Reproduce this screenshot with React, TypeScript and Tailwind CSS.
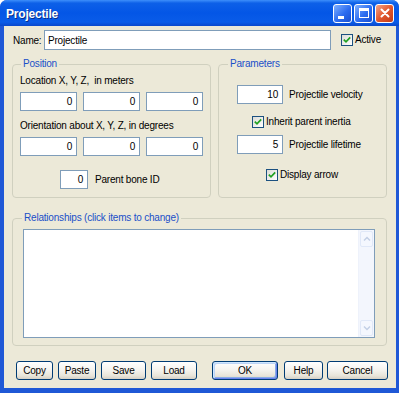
import React from "react";

function Check() {
  return (
    <svg width="8" height="8" viewBox="0 0 8 8">
      <path d="M0.8 3.6 L3 5.8 L7.2 1.4" stroke="#21a121" strokeWidth="1.7" fill="none" />
    </svg>
  );
}

function CheckBox({ label, className }: { label: string; className?: string }) {
  return (
    <div className={"flex items-center " + (className ?? "")}>
      <div className="w-[12px] h-[12px] border border-[#1c5180] bg-[linear-gradient(135deg,#dcdcd7,#ffffff)] flex items-center justify-center">
        <Check />
      </div>
      <span className="ml-[2px] leading-[12px]">{label}</span>
    </div>
  );
}

function Field({ value, className }: { value: string; className: string }) {
  return (
    <div className={"h-[19px] border border-[#7f9db9] bg-white flex items-center justify-end pr-[4px] leading-none " + className}>
      {value}
    </div>
  );
}

function Btn({ label, className, def }: { label: string; className: string; def?: boolean }) {
  return (
    <div
      className={
        "h-[19px] border border-[#003c74] rounded-[3px] bg-[linear-gradient(180deg,#ffffff_0%,#f5f4ef_45%,#e8e5da_80%,#d6d0c5_100%)] flex items-center justify-center leading-none " +
        (def ? "shadow-[inset_1px_1px_0_#cee7ff,inset_-1px_-1px_0_#6982ee,inset_2px_2px_0_#bcd4f6,inset_-2px_-2px_0_#89ade4] " : "") +
        className
      }
    >
      {label}
    </div>
  );
}

export default function App() {
  return (
    <div className="w-[399px] h-[393px] flex flex-col bg-[#1f58d6] rounded-t-[7px] overflow-hidden font-['Liberation_Sans',Arial,sans-serif] text-[10px] tracking-[-0.2px] text-black">
      {/* Title bar */}
      <div className="h-[26px] shrink-0 flex items-center pl-[6px] pr-[5px] bg-[linear-gradient(180deg,#3d8ffb_0%,#0d60e8_12%,#0456e6_50%,#0a5ce8_85%,#0a48cc_100%)]">
        <span className="text-white font-bold text-[12px] tracking-[-0.2px] pt-[1px] [text-shadow:1px_1px_0_#0a2f8a]">Projectile</span>
        <div className="ml-auto flex gap-[2px]">
          <div className="w-[19px] h-[19px] rounded-[3px] border border-white bg-[linear-gradient(135deg,#7fb0ff,#2c6cf0_55%,#1a4fd0)] flex items-end">
            <div className="w-[6px] h-[3px] bg-white ml-[4px] mb-[3px]" />
          </div>
          <div className="w-[19px] h-[19px] rounded-[3px] border border-white bg-[linear-gradient(135deg,#7fb0ff,#2c6cf0_55%,#1a4fd0)] flex items-center justify-center">
            <div className="w-[10px] h-[10px] border border-white border-t-[3px]" />
          </div>
          <div className="w-[19px] h-[19px] rounded-[3px] border border-white bg-[linear-gradient(135deg,#f4a488,#e2582f_50%,#c23a17)] flex items-center justify-center">
            <svg width="10" height="10" viewBox="0 0 10 10">
              <path d="M1.5 1.5 L8.5 8.5 M8.5 1.5 L1.5 8.5" stroke="white" strokeWidth="2" strokeLinecap="round" />
            </svg>
          </div>
        </div>
      </div>

      {/* Frame */}
      <div className="flex-1 flex flex-col pl-[4px] pr-[3px] pb-[5px]">
        <div className="flex-1 flex flex-col bg-[#ece9d8] px-[8px] pt-[4px]">
          {/* Name row */}
          <div className="flex items-center h-[20px]">
            <span className="w-[32px] pl-[1px]">Name:</span>
            <div className="w-[287px] h-[20px] border border-[#7f9db9] bg-white flex items-center pl-[3px]">Projectile</div>
            <CheckBox label="Active" className="ml-[10px]" />
          </div>

          {/* Groups */}
          <div className="flex gap-[7px] mt-[8px]">
            <fieldset className="w-[199px] border border-[#d0d0bf] rounded-[4px] px-[7px] pb-[8px] flex flex-col">
              <legend className="px-[2px] ml-[1px] leading-[12px] text-[#1a4fc8]">Position</legend>
              <div className="mt-[5px] leading-[12px]">Location X, Y, Z,&nbsp; in meters</div>
              <div className="flex gap-[6px] mt-[5px]">
                <Field value="0" className="w-[57px]" />
                <Field value="0" className="w-[57px]" />
                <Field value="0" className="w-[57px]" />
              </div>
              <div className="mt-[9px] leading-[12px]">Orientation about X, Y, Z, in degrees</div>
              <div className="flex gap-[6px] mt-[5px]">
                <Field value="0" className="w-[57px]" />
                <Field value="0" className="w-[57px]" />
                <Field value="0" className="w-[57px]" />
              </div>
              <div className="flex items-center mt-[14px] ml-[40px]">
                <Field value="0" className="w-[28px]" />
                <span className="ml-[7px]">Parent bone ID</span>
              </div>
            </fieldset>

            <fieldset className="w-[169px] border border-[#d0d0bf] rounded-[4px] px-[7px] pb-[8px] flex flex-col">
              <legend className="px-[2px] ml-[2px] leading-[12px] text-[#1a4fc8]">Parameters</legend>
              <div className="flex items-center mt-[15px] ml-[11px]">
                <Field value="10" className="w-[46px]" />
                <span className="ml-[6px]">Projectile velocity</span>
              </div>
              <CheckBox label="Inherit parent inertia" className="mt-[12px] ml-[26px]" />
              <div className="flex items-center mt-[7px] ml-[11px]">
                <Field value="5" className="w-[46px]" />
                <span className="ml-[6px]">Projectile lifetime</span>
              </div>
              <CheckBox label="Display arrow" className="mt-[15px] ml-[40px]" />
            </fieldset>
          </div>

          {/* Relationships */}
          <fieldset className="mt-[14px] w-[375px] border border-[#d0d0bf] rounded-[4px] pl-[10px] pr-[11px] pb-[7px] flex flex-col">
            <legend className="px-[2px] -ml-[1px] leading-[12px] text-[#1a4fc8]">Relationships (click items to change)</legend>
            <div className="mt-[5px] h-[109px] border border-[#7f9db9] bg-white flex">
              <div className="flex-1" />
              <div className="w-[16px] flex flex-col bg-[#f3f6fd] border-l border-[#eef2fb]">
                <div className="h-[16px] m-[1px] rounded-[2px] border border-[#e0e8f8] bg-[#f4f7fe] flex items-center justify-center">
                  <svg width="8" height="6" viewBox="0 0 8 6">
                    <path d="M1 4.5 L4 1.5 L7 4.5" stroke="#c3cfe6" strokeWidth="1.5" fill="none" />
                  </svg>
                </div>
                <div className="flex-1" />
                <div className="h-[16px] m-[1px] rounded-[2px] border border-[#e0e8f8] bg-[#f4f7fe] flex items-center justify-center">
                  <svg width="8" height="6" viewBox="0 0 8 6">
                    <path d="M1 1.5 L4 4.5 L7 1.5" stroke="#c3cfe6" strokeWidth="1.5" fill="none" />
                  </svg>
                </div>
              </div>
            </div>
          </fieldset>

          {/* Buttons */}
          <div className="flex mt-[15px] pl-[4px]">
            <Btn label="Copy" className="w-[37px]" />
            <Btn label="Paste" className="w-[38px] ml-[5px]" />
            <Btn label="Save" className="w-[45px] ml-[5px]" />
            <Btn label="Load" className="w-[46px] ml-[5px]" />
            <Btn label="OK" className="w-[66px] ml-[15px]" def />
            <Btn label="Help" className="w-[39px] ml-[6px]" />
            <Btn label="Cancel" className="w-[61px] ml-[4px]" />
          </div>
        </div>
      </div>
    </div>
  );
}
